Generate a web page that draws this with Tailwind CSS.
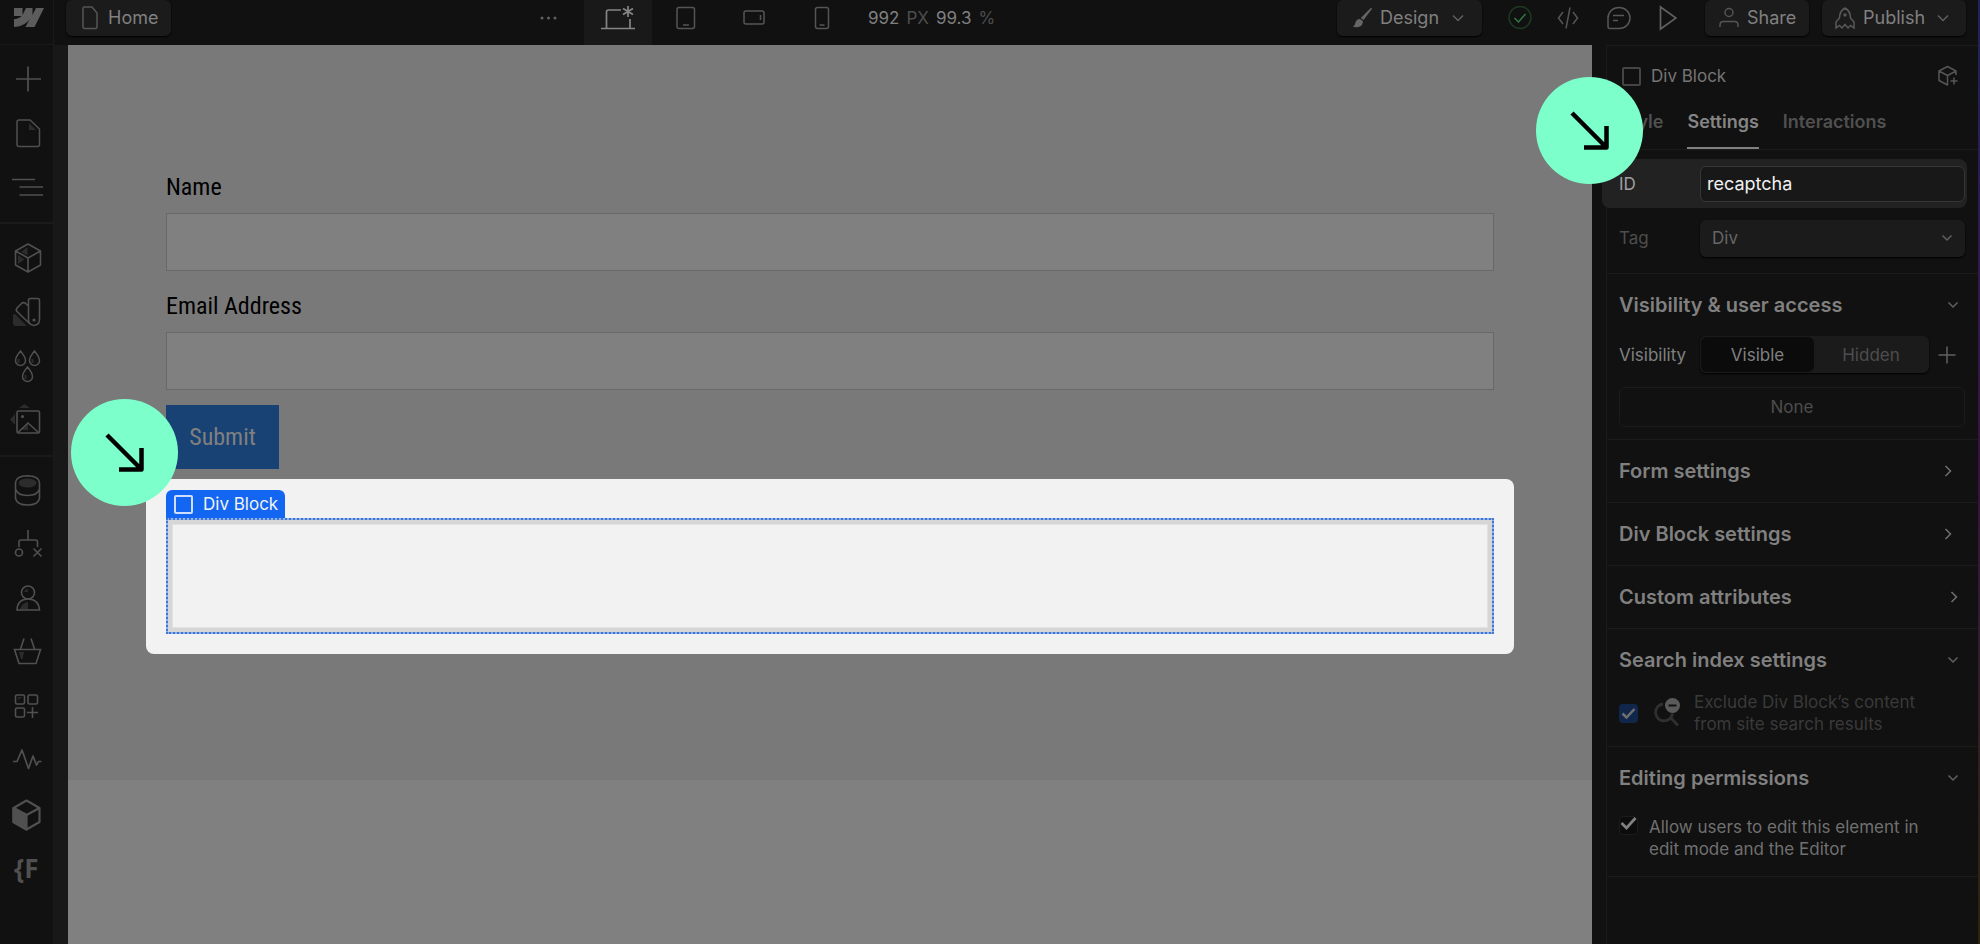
<!DOCTYPE html>
<html lang="en" class="h-full">
<head>
    <meta charset="UTF-8">
    <meta name="viewport" content="width=device-width, initial-scale=1.0">
    <title>Home - Designer</title>
    <script src="https://cdn.jsdelivr.net/npm/@tailwindcss/browser@4"></script>
</head>
<body class="flex h-screen flex-col overflow-hidden bg-[#111111] font-['Inter',sans-serif] text-[17px] leading-[22px] text-[#808080]">
    <!-- Top bar -->
    <header class="flex h-[45px] shrink-0 items-start justify-between pr-[14px]">
        <div class="flex">
            <a href="#" aria-label="Dashboard" class="h-[45px] w-[54px] border-r border-b border-[#1a1a1a] pt-2 pl-[14px]">
                <svg class="h-5 w-[30px]" viewBox="0 0 30 20" fill="#5c5c5c"><path d="M30 0 20.500 19H11.500L15.500 11.200C12.500 15.500 7.500 18.600 0 19V11.300S4.800 11 7.600 8.100H0V0H8.500V7L12 0H18.500V6.900L22 0Z"/></svg>
            </a>
            <button class="ml-3 flex h-9 w-[105px] items-center rounded-md bg-[#1b1b1b] pl-4 text-[18px] shadow-[0_1px_2px_#000000]">
                <svg class="mr-[10px] h-6 w-4" viewBox="0 0 16 24" fill="none" stroke="#555555" stroke-width="1.500"><path d="M2 1H10L15 7V21Q15 22.500 13.500 22.500H2.500Q1 22.500 1 21V2Q1 1 2 1Z"/></svg>
                Home
            </button>
        </div>
        <div class="flex">
            <button aria-label="More breakpoints" class="flex h-9 w-[70px] items-center justify-center">
                <svg class="h-4 w-[18px]" viewBox="0 0 18 16" fill="#606060"><circle cx="2" cy="8" r="1.500"/><circle cx="8.500" cy="8" r="1.500"/><circle cx="15" cy="8" r="1.500"/></svg>
            </button>
            <button aria-label="Desktop" class="flex h-[45px] w-[68px] justify-center bg-[#191919] pt-1">
                <svg class="h-7 w-9" viewBox="0 0 36 28" fill="none" stroke="#858585" stroke-width="1.700"><path d="M1 24.500H35M6.500 24.500V8Q6.500 6 8.500 6H21M30 15V24"/><path d="M28 2V13M23 4.500 33 10.500M33 4.500 23 10.500"/></svg>
            </button>
            <button aria-label="Tablet" class="flex h-9 w-[68px] items-center justify-center">
                <svg class="h-6 w-5" viewBox="0 0 20 24" fill="none" stroke="#555555" stroke-width="1.500"><rect x="1" y="1.500" width="17.500" height="21" rx="2"/><path d="M7 19H13"/></svg>
            </button>
            <button aria-label="Mobile landscape" class="flex h-9 w-[68px] items-center justify-center">
                <svg class="h-4 w-[22px]" viewBox="0 0 22 16" fill="none" stroke="#555555" stroke-width="1.500"><rect x="1" y="1" width="20" height="13" rx="2"/><path d="M17.500 5V10"/></svg>
            </button>
            <button aria-label="Mobile portrait" class="flex h-9 w-[68px] items-center justify-center">
                <svg class="h-6 w-4" viewBox="0 0 16 24" fill="none" stroke="#555555" stroke-width="1.500"><rect x="1.500" y="1.500" width="13" height="21" rx="2"/><path d="M5.500 19H10.500"/></svg>
            </button>
            <p class="flex h-9 w-[138px] items-center gap-[7px] pl-3 whitespace-nowrap">992 <span class="text-[#4d4d4d]">PX</span> 99.3 <span class="text-[#4d4d4d]">%</span></p>
        </div>
        <div class="flex items-center">
            <button class="flex h-9 w-[145px] items-center rounded-md bg-[#1b1b1b] pl-4 text-[18px] shadow-[0_1px_2px_#000000]">
                <svg class="mr-2 h-5 w-[19px]" viewBox="0 0 19 20" fill="#666666"><path d="M18.500 0 19 .8 10.500 12 7.800 10 17.500 .3ZM7 11 10 13.200Q9.500 19 4 19.300 1.500 19.500 0 18.500 2 17.500 2.500 14.500 3.500 10.800 7 11Z"/></svg>
                <span class="flex-1 text-left">Design</span>
                <svg class="mr-[18px] h-3 w-3" viewBox="0 0 12 12" fill="none" stroke="#606060" stroke-width="1.500"><path d="M1 3.500 6 8.500 11 3.500"/></svg>
            </button>
            <div class="flex items-center pl-6">
                <button aria-label="Saved" class="w-[51px]"><svg class="h-6 w-[26px]" viewBox="0 0 26 24" fill="none" stroke-width="1.500"><circle cx="14" cy="11.500" r="11" stroke="#1c3a24"/><path d="M8.500 12 12.500 16 19.500 8" stroke="#2f7d45"/></svg></button>
                <button aria-label="Code" class="w-[50px]"><svg class="h-6 w-[22px]" viewBox="0 0 22 24" fill="none" stroke="#555555" stroke-width="1.500"><path d="M6 6 1.500 12 6 18M16 6 20.500 12 16 18M13 1.500 9 22.500"/></svg></button>
                <button aria-label="Comments" class="w-[52px]"><svg class="h-6 w-6" viewBox="0 0 24 24" fill="none" stroke="#585858" stroke-width="1.500"><path d="M1 12A11 10.500 0 1 1 12 22.500H3Q1 22.500 1 20.500ZM6 9.500H17M6 14.500H11"/></svg></button>
                <button aria-label="Preview" class="w-[46px]"><svg class="h-7 w-[18px]" viewBox="0 0 18 28" fill="none" stroke="#606060" stroke-width="1.700"><path d="M1.500 3V25L17 14Z"/></svg></button>
            </div>
            <button class="flex h-9 w-[104px] items-center rounded-md bg-[#1b1b1b] pl-[14px] text-[18px] shadow-[0_1px_2px_#000000]">
                <svg class="mr-2 h-6 w-5" viewBox="0 0 20 24" fill="none" stroke="#555555" stroke-width="1.500"><circle cx="10" cy="6.500" r="4"/><path d="M1 21V19Q1 15.500 4.500 15.500H15.500Q19 15.500 19 19V21"/></svg>
                Share
            </button>
            <button class="ml-[13px] flex h-9 w-[144px] items-center rounded-md bg-[#1b1b1b] pl-[13px] text-[18px] shadow-[0_1px_2px_#000000]">
                <svg class="mr-2 h-6 w-5" viewBox="0 0 20 24" fill="none" stroke="#585858" stroke-width="1.500"><path d="M10 2Q4.500 5 4.500 12L1 16V22L4.500 19.500 7 22 10 18.500 13 22 15.500 19.500 19 22V16L15.500 12Q15.500 5 10 2Z"/><circle cx="10" cy="9" r="1" fill="#585858"/></svg>
                <span class="flex-1 text-left">Publish</span>
                <svg class="mr-[17px] h-3 w-3" viewBox="0 0 12 12" fill="none" stroke="#606060" stroke-width="1.500"><path d="M1 3.500 6 8.500 11 3.500"/></svg>
            </button>
        </div>
    </header>

    <div class="flex min-h-0 flex-1">
        <!-- Left toolbar -->
        <nav class="w-[54px] shrink-0 border-r border-[#1a1a1a] text-[#505050]">
            <div class="border-b-2 border-[#1a1a1a] pt-[7px] pb-2">
                <button aria-label="Add" class="flex h-[54px] w-full items-center pl-[9px]"><svg class="h-9 w-9" viewBox="0 0 36 36" fill="none" stroke="currentColor" stroke-width="1.700"><path d="M7 18H32M19 5.500V30.500"/></svg></button>
                <button aria-label="Pages" class="flex h-[54px] w-full items-center pl-[9px]"><svg class="h-9 w-9" viewBox="0 0 36 36" fill="none" stroke="currentColor" stroke-width="1.500"><path d="M20 8V15H27Z" fill="#2c2c2c" stroke="none"/><path d="M10 5H21L30.500 14V29.500Q30.500 31.500 28.500 31.500H10Q8 31.500 8 29.500V7Q8 5 10 5Z"/></svg></button>
                <button aria-label="Navigator" class="flex h-[54px] w-full items-center pl-[9px]"><svg class="h-9 w-9" viewBox="0 0 36 36" fill="none" stroke="currentColor" stroke-width="1.700"><path d="M3 10.500H26M10.500 18H34M10.500 26H34"/></svg></button>
            </div>
            <div class="border-b-2 border-[#1a1a1a] pt-[7px] pb-2">
                <button aria-label="Components" class="flex h-[54px] w-full items-center pl-[9px]"><svg class="h-9 w-9" viewBox="0 0 36 36" fill="none" stroke="currentColor" stroke-width="1.600" stroke-linejoin="round"><path d="M12 12 18.500 7V15.500ZM9 15 15.500 19.500 9 24Z" fill="#2c2c2c" stroke="none"/><path d="M19 4 31.500 11V25L19 32 6.500 25V11ZM6.500 11 19 18 31.500 11M19 18V32"/></svg></button>
                <button aria-label="Styles" class="flex h-[54px] w-full items-center pl-[9px]"><svg class="h-9 w-9" viewBox="0 0 36 36" fill="none" stroke="currentColor" stroke-width="1.600"><path d="M4 21Q4 20 6 20L18 32H7Q4 32 4 29Z" fill="#2c2c2c" stroke="none"/><path d="M21.500 4.500H28.500Q30.500 4.500 30.500 6.500V26Q30 31 25 31.500 20 31 19.500 26V6.500Q19.500 4.500 21.500 4.500ZM19.500 12 16 9Q14 8 12.500 9.500L8 14Q6.500 16 8 17.500L21 30"/><circle cx="25" cy="26" r=".8"/></svg></button>
                <button aria-label="Variables" class="flex h-[54px] w-full items-center pl-[9px]"><svg class="h-9 w-9" viewBox="0 0 36 36" fill="none" stroke="currentColor" stroke-width="1.500"><path d="M11.500 3Q6.500 9 6.500 12.500A5 5 0 0 0 16.500 12.500Q16.500 9 11.500 3ZM25.500 3Q20.500 9 20.500 12.500A5 5 0 0 0 30.500 12.500Q30.500 9 25.500 3ZM18.500 19Q13.500 25 13.500 28.500A5 5 0 0 0 23.500 28.500Q23.500 25 18.500 19Z"/><path d="M9.500 11V15M23.500 11V15M16.500 27V31" stroke="#2c2c2c" stroke-width="2"/></svg></button>
                <button aria-label="Assets" class="flex h-[54px] w-full items-center pl-[9px]"><svg class="h-9 w-9" viewBox="0 0 36 36" fill="none" stroke="currentColor" stroke-width="1.600"><path d="M10 6 15.500 2 21 6ZM6 12 1 17.500 6 23ZM12 28 19 22V28Z" fill="#2c2c2c" stroke="none"/><rect x="8" y="9" width="22.500" height="22" rx="1.500"/><path d="M9 30.500 19 21 29.500 30.500"/><circle cx="13.500" cy="14.500" r=".8"/></svg></button>
            </div>
            <div class="pt-[6px]">
                <button aria-label="CMS" class="flex h-[54px] w-full items-center pl-[9px]"><svg class="h-9 w-9" viewBox="0 0 36 36" fill="none" stroke="currentColor" stroke-width="1.600"><ellipse cx="18.500" cy="11" rx="9" ry="4.500" fill="#2c2c2c" stroke="none"/><path d="M6.500 10.500Q7 4 18.500 3.700 30 4 30.500 10.500V26.500Q29 33 18.500 33 8 33 6.500 26.500ZM6.500 17Q8.500 23.500 18.500 23.500 28.500 23.500 30.500 17"/></svg></button>
                <button aria-label="Logic" class="flex h-[54px] w-full items-center pl-[9px]"><svg class="h-9 w-9" viewBox="0 0 36 36" fill="none" stroke="currentColor" stroke-width="1.600"><path d="M19 4V14M10 21V16Q10 14 12 14H26.500Q28.500 14 28.500 16V21M24.500 22.500 32.500 30.500M32.500 22.500 24.500 30.500"/><circle cx="10" cy="26.500" r="3.500"/></svg></button>
                <button aria-label="Users" class="flex h-[54px] w-full items-center pl-[9px]"><svg class="h-9 w-9" viewBox="0 0 36 36" fill="none" stroke="currentColor" stroke-width="1.600"><path d="M19 22V29H11Q13 23 19 22ZM15 12Q16 9 19 9V12Z" fill="#2c2c2c" stroke="none"/><circle cx="19" cy="12.500" r="6.500"/><path d="M8 30Q8.500 19 19 19T30.500 30Z"/></svg></button>
                <button aria-label="Ecommerce" class="flex h-[54px] w-full items-center pl-[9px]"><svg class="h-9 w-9" viewBox="0 0 36 36" fill="none" stroke="currentColor" stroke-width="1.600"><path d="M10 18H15L13.500 25H12Z" fill="#2c2c2c" stroke="none"/><path d="M5.500 15.500H31.500L27 29.500H10ZM11.500 15 15 4.500M25.500 15 22 4.500"/></svg></button>
                <button aria-label="Apps" class="flex h-[54px] w-full items-center pl-[9px]"><svg class="h-9 w-9" viewBox="0 0 36 36" fill="none" stroke="currentColor" stroke-width="1.600"><path d="M9 12V9H13Z" fill="#2c2c2c" stroke="none"/><rect x="6.500" y="7" width="9" height="9" rx="1.500"/><rect x="19" y="7" width="9.500" height="9" rx="1.500"/><rect x="6.500" y="20" width="9" height="9" rx="1.500"/><path d="M18 24.500H29M23.500 19V30"/></svg></button>
                <button aria-label="Activity" class="flex h-[54px] w-full items-center pl-[9px]"><svg class="h-9 w-9" viewBox="0 0 36 36" fill="none" stroke="currentColor" stroke-width="1.700" stroke-linejoin="round"><path d="M4 19.500H8L13 8 19.500 26.500 24 14 27.500 23 29.500 19.500H32.500"/></svg></button>
                <button aria-label="Library app" class="flex h-[54px] w-full items-center pl-[9px]"><svg class="h-9 w-9" viewBox="0 0 36 36" fill="none" stroke="currentColor" stroke-width="2.200" stroke-linejoin="round"><path d="M4.500 12 17.500 19V33.500L4.500 26Z" fill="currentColor"/><path d="M17.500 4.500 30.500 12V26L17.500 33.500 4.500 26V12ZM4.500 12 17.500 19 30.500 12"/></svg></button>
                <button aria-label="Finsweet" class="flex h-[54px] w-full items-center pl-[14px] font-['Noto_Sans',sans-serif] text-[26px] leading-9 font-bold">{F</button>
            </div>
        </nav>

        <!-- Canvas -->
        <main class="relative flex-1 border-r-[14px] border-l-[14px] border-r-[#111111] border-l-[#181818] bg-[#808080] font-['Roboto_Condensed','Liberation_Sans_Narrow',sans-serif]">
            <form class="bg-[#797979] pt-[122px] pb-[126px]">
                <div class="px-[98px] text-[24px] leading-10">
                    <label for="name" class="block text-black">Name</label>
                    <input type="text" id="name" class="mt-[6px] mb-[15px] block h-[58px] w-full border border-[#686868] bg-[#808080] px-3">
                    <label for="email" class="block text-black">Email Address</label>
                    <input type="email" id="email" class="mt-[6px] mb-[15px] block h-[58px] w-full border border-[#686868] bg-[#808080] px-3">
                    <button type="button" class="block h-16 w-[113px] bg-[#194274] text-[#808080]">Submit</button>
                </div>
                <!-- Selected element -->
                <div class="mx-[78px] mt-[10px] rounded-lg bg-[#f2f2f2] px-5 pt-[11px] pb-5">
                    <div class="flex h-7 w-[119px] items-center gap-[10px] rounded-t-md bg-[#1266f1] pl-2 font-['Inter',sans-serif] text-[17px] leading-[22px] whitespace-nowrap text-[#f2f2f2]">
                        <span class="h-[19px] w-[19px] shrink-0 rounded-xs border-2 border-[#cfdffb]"></span>Div Block
                    </div>
                    <div class="h-[116px] border-2 border-dotted border-[#3f75d4] bg-[#8fb2ea]">
                        <div class="h-full bg-[#d6d6d6] p-1">
                            <div class="h-full border border-[#e2e2e2] bg-[#f2f2f2]"></div>
                        </div>
                    </div>
                </div>
            </form>
            <div class="absolute top-[354px] left-[3px] flex h-[107px] w-[107px] items-center justify-center rounded-full bg-[#7dffcb]">
                <svg class="h-10 w-10" viewBox="0 0 40 40" fill="none" stroke="#000000" stroke-width="4.500"><path d="M2 2 36 36M36.500 15V36.500H14" stroke-linejoin="round"/></svg>
            </div>
        </main>

        <!-- Right panel -->
        <aside class="relative w-[372px] shrink-0 border-t border-l border-[#1b1b1b]">
            <div class="-mt-px flex h-[62px] items-center pr-[19px] pl-[15px]">
                <span class="mr-[10px] h-[19px] w-[19px] rounded-xs border-2 border-[#444444]"></span>
                <h1 class="flex-1 text-[#757575]">Div Block</h1>
                <button aria-label="Create component"><svg class="h-[22px] w-[22px]" viewBox="0 0 22 22" fill="none" stroke="#555555" stroke-width="1.500" stroke-linejoin="round"><path d="M19 10V6L10.500 1.500 2 6V15.500L10.500 20V10.500L19 6M2 6 10.500 10.500M17 12.500V19.500M13.500 16H20.500"/></svg></button>
            </div>
            <div class="flex h-[43px] gap-6 border-b border-[#1b1b1b] pl-3 text-[18px] leading-[30px] font-semibold text-[#505050]">
                <button class="h-[42px] pb-3">Style</button>
                <button class="h-[42px] border-b-2 border-[#808080] pb-[10px] text-[#858585]">Settings</button>
                <button class="h-[42px] pb-3">Interactions</button>
            </div>

            <div class="border-b border-[#1b1b1b] pt-[9px] pb-4">
                <div class="mr-[11px] -ml-[5px] flex h-[49px] items-center justify-between rounded-lg bg-[#222222] pr-[2px] pl-[17px]">
                    <label for="element-id" class="text-[#a0a0a0]">ID</label>
                    <input type="text" id="element-id" value="recaptcha" class="h-9 w-[265px] rounded-md border border-[#363636] bg-[#181818] pl-[6px] text-[18px] text-[#f0f0f0]">
                </div>
                <div class="relative mt-[11px] flex h-[38px] items-center justify-between pr-[13px] pl-3">
                    <label for="tag" class="text-[#4d4d4d]">Tag</label>
                    <select id="tag" class="h-[37px] w-[265px] appearance-none rounded-md bg-[#1b1b1b] pl-3 text-[#666666] shadow-[0_1px_2px_#000000]"><option>Div</option></select>
                    <svg class="pointer-events-none absolute right-[25px] h-3 w-3" viewBox="0 0 12 12" fill="none" stroke="#606060" stroke-width="1.500"><path d="M1.500 3.500 6 8 10.500 3.500"/></svg>
                </div>
            </div>

            <section class="border-b border-[#1b1b1b] pr-[13px] pb-3 pl-3">
                <button class="flex h-[62px] w-full items-center justify-between pr-[6px] text-[20px] font-semibold">Visibility &amp; user access
                    <svg class="h-3 w-3" viewBox="0 0 12 12" fill="none" stroke="#606060" stroke-width="1.500"><path d="M1.500 3.500 6 8 10.500 3.500"/></svg>
                </button>
                <div class="flex h-[37px] items-center">
                    <span class="w-[81px]">Visibility</span>
                    <div class="flex h-[37px] w-[229px] rounded-md bg-[#1b1b1b] p-px shadow-[0_1px_2px_#000000]">
                        <button class="w-[113px] rounded-md bg-[#0b0b0b]">Visible</button>
                        <button class="flex-1 text-[#4d4d4d]">Hidden</button>
                    </div>
                    <button aria-label="Add condition" class="ml-2"><svg class="h-5 w-5" viewBox="0 0 20 20" fill="none" stroke="#606060" stroke-width="1.500"><path d="M1.500 10H18.500M10 1.500V18.500"/></svg></button>
                </div>
                <div class="mt-[14px] flex h-10 items-center justify-center rounded-md border border-[#1b1b1b] text-[#4d4d4d]">None</div>
            </section>

            <section class="border-b border-[#1b1b1b]">
                <button class="flex h-[62px] w-full items-center justify-between pr-6 pl-3 text-[20px] font-semibold">Form settings
                    <svg class="h-3 w-3" viewBox="0 0 12 12" fill="none" stroke="#707070" stroke-width="1.500"><path d="M3.500 1 8.500 6 3.500 11"/></svg>
                </button>
            </section>
            <section class="border-b border-[#1b1b1b]">
                <button class="flex h-[62px] w-full items-center justify-between pr-6 pl-3 text-[20px] font-semibold">Div Block settings
                    <svg class="h-3 w-3" viewBox="0 0 12 12" fill="none" stroke="#707070" stroke-width="1.500"><path d="M3.500 1 8.500 6 3.500 11"/></svg>
                </button>
            </section>
            <section class="border-b border-[#1b1b1b]">
                <button class="flex h-[62px] w-full items-center justify-between pr-[18px] pl-3 text-[20px] font-semibold">Custom attributes
                    <svg class="h-3 w-3" viewBox="0 0 12 12" fill="none" stroke="#707070" stroke-width="1.500"><path d="M3.500 1 8.500 6 3.500 11"/></svg>
                </button>
            </section>

            <section class="border-b border-[#1b1b1b] pr-[13px] pb-[11px] pl-3">
                <button class="flex h-[62px] w-full items-center justify-between pr-[6px] text-[20px] font-semibold">Search index settings
                    <svg class="h-3 w-3" viewBox="0 0 12 12" fill="none" stroke="#606060" stroke-width="1.500"><path d="M1.500 3.500 6 8 10.500 3.500"/></svg>
                </button>
                <div class="relative flex items-center">
                    <input type="checkbox" id="exclude" checked disabled class="h-[19px] w-[19px] shrink-0 appearance-none rounded-sm bg-[#10264b]">
                    <svg class="pointer-events-none absolute left-0 h-[19px] w-[19px]" viewBox="0 0 19 19" fill="none" stroke="#707070" stroke-width="2.500"><path d="M3.500 9.500 7.500 13.500 15.500 5"/></svg>
                    <svg class="mr-[11px] ml-4 h-[30px] w-[29px]" viewBox="0 0 29 30" fill="none"><path d="M9 6A8.500 8.500 0 1 0 18.500 15.500M16 19 24 27.500" stroke="#303030" stroke-width="2.800"/><circle cx="18.500" cy="7.500" r="7.500" fill="#5a5a5a"/><path d="M14.500 7.500H22.500" stroke="#111111" stroke-width="2"/></svg>
                    <label for="exclude" class="text-[#3a3a3a]">Exclude Div Block’s content<br>from site search results</label>
                </div>
            </section>

            <section class="border-b border-[#1b1b1b] pr-[13px] pb-4 pl-3">
                <button class="flex h-[62px] w-full items-center justify-between pr-[6px] text-[20px] font-semibold">Editing permissions
                    <svg class="h-3 w-3" viewBox="0 0 12 12" fill="none" stroke="#606060" stroke-width="1.500"><path d="M1.500 3.500 6 8 10.500 3.500"/></svg>
                </button>
                <div class="relative flex items-start gap-[11px] pt-[7px]">
                    <input type="checkbox" id="allow-edit" checked class="h-[19px] w-[19px] shrink-0 appearance-none rounded-sm border border-[#1b1b1b] bg-[#0c0c0c]">
                    <svg class="pointer-events-none absolute top-[6px] left-0 h-[19px] w-[19px]" viewBox="0 0 19 19" fill="none" stroke="#808080" stroke-width="2.800"><path d="M2.500 8 7.500 13 16.500 3"/></svg>
                    <label for="allow-edit" class="text-[#707070]">Allow users to edit this element in<br>edit mode and the Editor</label>
                </div>
            </section>

            <div class="absolute top-[31px] -left-[71px] flex h-[107px] w-[107px] items-center justify-center rounded-full bg-[#7dffcb]">
                <svg class="h-10 w-10" viewBox="0 0 40 40" fill="none" stroke="#000000" stroke-width="4.500"><path d="M2 2 36 36M36.500 15V36.500H14" stroke-linejoin="round"/></svg>
            </div>
        </aside>
        <div class="-mt-[45px] w-[2px] shrink-0 bg-linear-to-b from-[#20245a] via-[#3a1040] to-[#2a2408]"></div>
    </div>
</body>
</html>
